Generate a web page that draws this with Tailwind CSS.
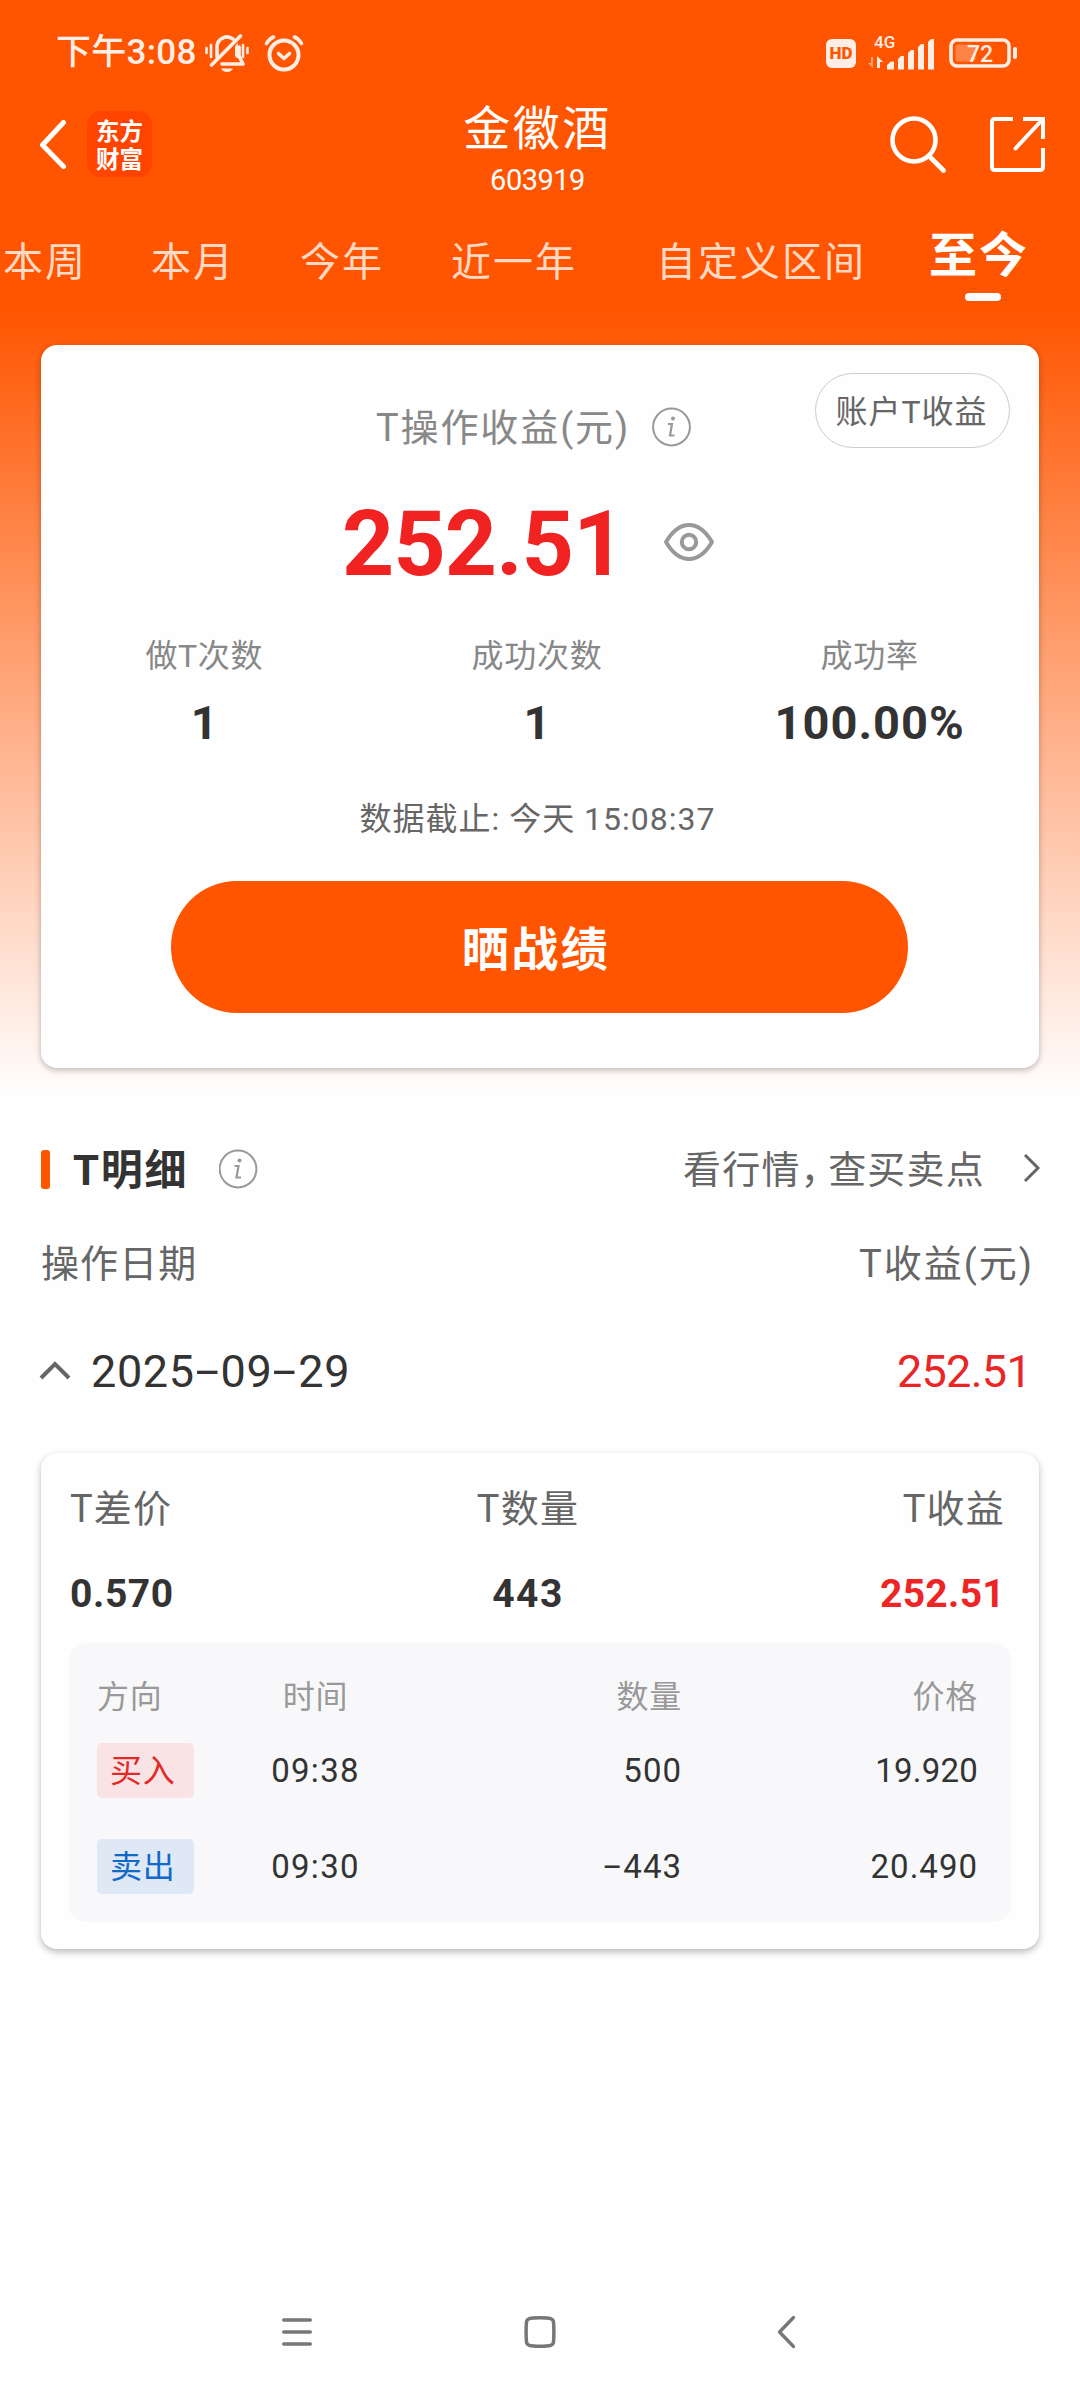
<!DOCTYPE html>
<html lang="zh-CN">
<head>
<meta charset="utf-8">
<title>金徽酒 603919</title>
<script src="https://cdn.jsdelivr.net/npm/@tailwindcss/browser@4"></script>
</head>
<body class="bg-white">
<div class="flex h-[2400px] w-[1080px] flex-col overflow-hidden whitespace-nowrap bg-[linear-gradient(to_bottom,#ff5500_0px,#ff5500_308px,#fffefe_1095px,#fefefe_1100px)] font-['Roboto','Noto_Sans_CJK_SC',sans-serif] text-[#333]">

  <!-- Status bar -->
  <div class="flex h-[100px] shrink-0 items-center pt-[6px] pl-[56px] text-[#ffeee6]">
    <span class="w-[149px] text-[35px] leading-[40px] font-medium tracking-[0.300px]">下午3:08</span>
    <svg class="h-[40px] w-[44px]" viewBox="0 0 44 40" fill="none" stroke="currentColor" stroke-linecap="round">
      <path d="M1.5 15v5M6 12v12M38 12v12M42.5 15v5" stroke-width="2.6"/>
      <path d="M12 24V14a10 10 0 0 1 16-8M34 14v9l4 8H17" stroke-width="3.6" stroke-linejoin="round"/>
      <path d="M35.500 3 6.500 32" stroke-width="3.6"/>
      <path d="M32.500 11v14l-2-2v-9z" fill="currentColor" stroke-width="1"/>
      <path d="M16 35.500h12q-2 3.500-6 3.500t-6-3.500z" fill="currentColor" stroke="none"/>
    </svg>
    <svg class="ml-[15px] h-[40px] w-[40px]" viewBox="0 0 40 40" fill="none" stroke="currentColor" stroke-linecap="round">
      <circle cx="20" cy="22" r="14.500" stroke-width="4"/>
      <path d="m14.500 20.500 5.500 5 5.500-5" stroke-width="3.600" stroke-linejoin="round"/>
      <path d="M2.500 10.500Q5 6 9.500 4M37.500 10.500Q35 6 30.500 4" stroke-width="3.600"/>
    </svg>
    <span class="ml-[522px] flex h-[29px] w-[30px] items-center justify-center rounded-[6px] bg-[#ffeee6] text-[17px] leading-none font-black text-[#ff5500]">HD</span>
    <span class="relative ml-[11px] h-[36px] w-[68px]">
      <span class="absolute -top-px left-[7px] text-[17px] leading-[17px] font-medium">4G</span>
      <svg class="h-[36px] w-[68px]" viewBox="0 0 68 36" fill="currentColor">
        <path d="M6 22v11L1 28h3v-6z" opacity=".5"/>
        <path d="M10 33V21l6 6h-3v6z"/>
        <path d="M20 34.500v-4.500l4-3.500h3v8zM31 34.500V24l3-3h3v13.500zM41 34.500V18l3-3h3v19.500zM51 34.500V12l3-3h3v25.500zM61 34.500V7l3-3h3v30.500z"/>
      </svg>
    </span>
    <svg class="ml-[14px] h-[30px] w-[70px]" viewBox="0 0 70 30">
      <rect x="2" y="2" width="58" height="26" rx="6" fill="none" stroke="currentColor" stroke-width="3.600"/>
      <rect x="6.500" y="6.500" width="20" height="17" rx="3" fill="#fff" opacity=".27"/>
      <path d="M66 11v8" stroke="currentColor" stroke-width="4" stroke-linecap="round"/>
      <text x="31" y="23.500" text-anchor="middle" class="font-['Roboto'] text-[23px] font-medium" fill="currentColor">72</text>
    </svg>
  </div>

  <!-- Title bar -->
  <div class="flex h-[104px] shrink-0 items-start text-white">
    <div class="flex h-[88px] w-[464px] items-center pl-[39px]">
      <svg class="h-[50px] w-[28px]" viewBox="0 0 28 50" fill="none" stroke="currentColor" stroke-width="5" stroke-linecap="round" stroke-linejoin="round"><path d="M24.500 3.500 3.500 26l21 21.500"/></svg>
      <span class="ml-[20px] flex h-[66px] w-[65px] flex-col items-center justify-center rounded-[14px] bg-[#ff4400] font-['Noto_Sans_CJK_SC'] text-[23.500px] leading-[28px] font-bold"><span>东方</span><span>财富</span></span>
    </div>
    <div class="flex w-[147px] flex-col items-center">
      <span class="text-[47px] leading-[58px] tracking-[2.500px]">金徽酒</span>
      <span class="text-[29px] leading-[44px] tracking-[-0.500px]">603919</span>
    </div>
    <div class="flex h-[88px] items-center pl-[278px]">
      <svg class="h-[58px] w-[58px]" viewBox="0 0 58 58" fill="none" stroke="currentColor" stroke-width="4.600" stroke-linecap="round"><circle cx="25" cy="25" r="21.500"/><path d="m40.500 41.500 14 14"/></svg>
      <svg class="ml-[42px] h-[58px] w-[58px]" viewBox="0 0 58 58" fill="none" stroke="currentColor" stroke-width="4"><path d="M24 4H6Q3 4 3 7v45q0 3 3 3h45q3 0 3-3V33"/><path d="M34 4h20v20"/><path d="M53 5 26.500 33.500" stroke-linecap="round"/></svg>
    </div>
  </div>

  <!-- Period tabs -->
  <div class="flex h-[141px] shrink-0 items-start pl-[3px] text-[40px] leading-[117px] tracking-[2px] text-[#ffd9c4]">
    <span class="w-[148px]">本周</span>
    <span class="w-[149px]">本月</span>
    <span class="w-[151px]">今年</span>
    <span class="w-[205px]">近一年</span>
    <span class="w-[273px]">自定义区间</span>
    <span class="relative text-[48px] leading-[104px] font-bold text-white">至今<i class="absolute top-[89px] left-[36px] h-[8px] w-[36px] rounded-full bg-white"></i></span>
  </div>

  <!-- Summary card -->
  <div class="relative mx-[41px] flex h-[723px] shrink-0 flex-col rounded-[16px] bg-[#fefefe] shadow-[0_2px_6px_rgba(0,0,0,0.28)]">
    <div class="absolute top-[28px] right-[29px] flex h-[75px] w-[195px] items-center justify-center rounded-full border border-[#ccc] pt-[2px] pr-[2px] text-[32px] tracking-[1px] text-[#666]">账户T收益</div>
    <div class="mt-[53px] flex h-[60px] items-center pl-[335px] text-[#888]">
      <span class="w-[276px] text-[38px] leading-[60px] tracking-[1.900px]">T操作收益(元)</span>
      <svg class="-mt-[2px] h-[40px] w-[40px]" viewBox="0 0 40 40" fill="none" stroke="#999" stroke-width="2"><circle cx="19.500" cy="20" r="18.400"/><path d="M16 17h4l-2 11.500h4.500" stroke-width="2.200"/><circle cx="21" cy="11.500" r="2" fill="#999" stroke="none"/></svg>
    </div>
    <div class="flex h-[170px] items-center pl-[301px]">
      <span class="w-[322px] pt-[3px] text-[91px] leading-none font-bold tracking-[-0.800px] text-[#f12222]">252.51</span>
      <svg class="-mt-[2px] h-[40px] w-[50px]" viewBox="0 0 50 40" fill="none" stroke="#999" stroke-width="4"><path d="M2 20Q12 3 25 3t23 17Q38 37 25 37T2 20z" stroke-linejoin="round"/><circle cx="25" cy="20" r="7.200"/></svg>
    </div>
    <div class="-ml-[3px] grid w-[998px] grid-cols-3 text-center">
      <span class="text-[32px] leading-[56px] tracking-[0.700px] text-[#888]">做T次数</span>
      <span class="text-[32px] leading-[56px] tracking-[0.700px] text-[#888]">成功次数</span>
      <span class="text-[32px] leading-[56px] tracking-[0.700px] text-[#888]">成功率</span>
      <span class="text-[47px] leading-[78px] font-bold">1</span>
      <span class="text-[47px] leading-[78px] font-bold">1</span>
      <span class="text-[47px] leading-[78px] font-bold tracking-[1px]">100.00%</span>
    </div>
    <div class="pr-[5px] text-center text-[32px] leading-[114px] tracking-[1px] text-[#666]">数据截止: 今天 15:08:37</div>
    <div class="mt-[5px] ml-[130px] h-[132px] w-[737px] rounded-full bg-[#ff5500] pr-[7px] text-center text-[47px] leading-[138px] font-bold tracking-[2.500px] text-white">晒战绩</div>
  </div>

  <!-- Detail section header -->
  <div class="mt-[66px] flex h-[70px] shrink-0 items-center pl-[41px]">
    <i class="h-[39px] w-[9px] rounded-[3px] bg-[#ff5500]"></i>
    <span class="ml-[23px] w-[146px] pt-[2px] text-[42px] font-bold tracking-[1.700px]">T明细</span>
    <svg class="h-[40px] w-[40px]" viewBox="0 0 40 40" fill="none" stroke="#999" stroke-width="2"><circle cx="19" cy="20" r="18.400"/><path d="M15.500 17h4l-2 11.500H22" stroke-width="2.200"/><circle cx="20.500" cy="11.500" r="2" fill="#999" stroke="none"/></svg>
    <span class="ml-[424px] w-[340px] pt-[2px] text-[38px] tracking-[1.200px] text-[#666]">看行情<span class="tracking-[-10.500px]">，</span>查买卖点</span>
    <svg class="-mt-[2px] h-[30px] w-[18px]" viewBox="0 0 18 30" fill="none" stroke="#666" stroke-width="3"><path d="m2 2 13 13L2 28"/></svg>
  </div>
  <div class="flex h-[120px] shrink-0 items-center justify-between pr-[46px] pl-[41px] text-[38px] tracking-[1.100px] text-[#666]">
    <span>操作日期</span><span class="tracking-[2px]">T收益(元)</span>
  </div>
  <div class="flex h-[94px] shrink-0 items-center pr-[49px] pl-[39px] text-[45px]">
    <svg class="h-[20px] w-[32px]" viewBox="0 0 32 20" fill="none" stroke="#666" stroke-width="4"><path d="M2 17 16 3l14 14"/></svg>
    <span class="ml-[20px] pt-[2px] tracking-[0.600px]">2025<span class="inline-block w-[26px] -translate-y-[1px] scale-x-[1.900] text-center">-</span>09<span class="inline-block w-[26px] -translate-y-[1px] scale-x-[1.900] text-center">-</span>29</span>
    <span class="ml-auto pt-[2px] tracking-[-0.700px] text-[#e92626]">252.51</span>
  </div>

  <!-- Trade detail card -->
  <div class="mx-[41px] mt-[35px] flex h-[496px] shrink-0 flex-col rounded-[16px] bg-[#fefefe] px-[28px] shadow-[0_3px_7px_rgba(0,0,0,0.27)]">
    <div class="grid grid-cols-[340px_1fr_359px] pr-[6px] pl-[1px] text-[38px] leading-[113px] tracking-[1.200px] text-[#666]">
      <span>T差价</span><span class="text-center">T数量</span><span class="text-right">T收益</span>
    </div>
    <div class="grid grid-cols-[340px_1fr_359px] pr-[6px] pl-[1px] text-[39px] leading-[56px] font-bold tracking-[0.300px]">
      <span class="tracking-[0.600px]">0.570</span><span class="text-center tracking-[1.500px]">443</span><span class="text-right text-[#ee2525]">252.51</span>
    </div>
    <div class="mt-[21px] h-[279px] rounded-[18px] bg-[#f8f8fa] pr-[33px] pl-[28px] text-[33px] tracking-[1px]">
      <div class="grid h-[100px] grid-cols-[97px_240px_248px_1fr] items-center pt-[7px] text-[32px] tracking-[0.700px] text-[#999]">
        <span>方向</span><span class="pl-[3px] text-center">时间</span><span class="text-right">数量</span><span class="text-right">价格</span>
      </div>
      <div class="grid h-[55px] grid-cols-[97px_240px_248px_1fr] items-center">
        <span class="h-[55px] rounded-[5px] bg-[#f9e3e4] pl-[13px] text-[32px] leading-[57px] tracking-[0.700px] text-[#e22a2a]">买入</span><span class="pl-[3px] text-center tracking-[1.300px]">09:38</span><span class="text-right">500</span><span class="text-right tracking-[0.200px]">19.920</span>
      </div>
      <div class="mt-[41px] grid h-[55px] grid-cols-[97px_240px_248px_1fr] items-center">
        <span class="h-[55px] rounded-[5px] bg-[#dfe9f6] pl-[13px] text-[32px] leading-[57px] tracking-[0.700px] text-[#1169c9]">卖出</span><span class="pl-[3px] text-center tracking-[1.300px]">09:30</span><span class="text-right"><span class="inline-block w-[20px] -translate-y-[1px] scale-x-[1.900] text-center">-</span>443</span><span class="text-right">20.490</span>
      </div>
    </div>
  </div>

  <!-- System navigation -->
  <div class="mt-auto flex h-[136px] shrink-0 items-center pl-[282px] text-[#777]">
    <svg class="h-[30px] w-[30px]" viewBox="0 0 30 30" stroke="currentColor" stroke-width="3.500" stroke-linecap="round"><path d="M1.750 3h26.500M1.750 15h26.500M1.750 27h26.500"/></svg>
    <svg class="ml-[212px] h-[34px] w-[32px]" viewBox="0 0 32 34" fill="none" stroke="currentColor" stroke-width="3.500"><path d="M16 2.700c11 0 13 1 13.500 4q.8 10.300 0 20.600c-.5 3-2.500 4-13.500 4s-13-1-13.500-4q-.8-10.300 0-20.600c.5-3 2.500-4 13.500-4z"/></svg>
    <svg class="ml-[221px] h-[34px] w-[20px]" viewBox="0 0 20 34" fill="none" stroke="currentColor" stroke-width="3.300" stroke-linecap="round" stroke-linejoin="round"><path d="M16.500 2.500 2.500 17l14 14.500"/></svg>
  </div>
</div>
</body>
</html>
